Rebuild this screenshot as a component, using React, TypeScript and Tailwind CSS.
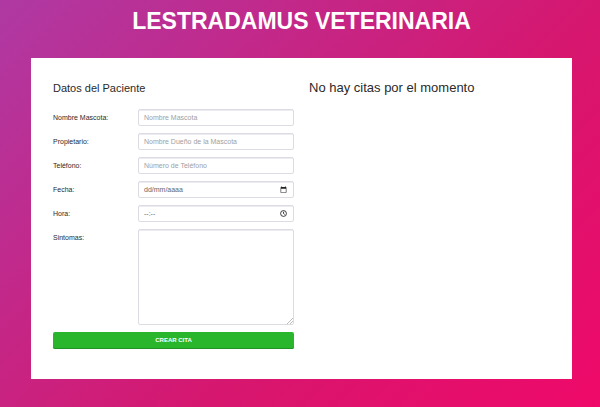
import React from "react";

const fieldClass =
  "block h-[17px] w-full rounded-[2px] border border-[#dcdde2] bg-white px-[5px] text-[7px] leading-[15px] text-[#666] shadow-[inset_0_1px_0_#ececf0] outline-none";

function CalendarIcon() {
  return (
    <svg viewBox="0 0 24 24" className="h-[7px] w-[7px]" fill="#222" aria-hidden="true">
      <path d="M20 3h-1V1h-2v2H7V1H5v2H4c-1.1 0-2 .9-2 2v16c0 1.1.9 2 2 2h16c1.1 0 2-.9 2-2V5c0-1.1-.9-2-2-2zm0 18H4V9h16v12z" />
    </svg>
  );
}

function ClockIcon() {
  return (
    <svg viewBox="0 0 24 24" className="h-[7px] w-[7px]" fill="none" stroke="#222" strokeWidth="3" aria-hidden="true">
      <circle cx="12" cy="12" r="10" />
      <path d="M12 6v6l4 3" />
    </svg>
  );
}

type FieldProps = {
  id: string;
  label: string;
  placeholder: string;
  tone?: string;
  icon?: React.ReactNode;
};

function Field({ id, label, placeholder, tone = "placeholder:text-[#a0a0a0]", icon }: FieldProps) {
  return (
    <div className="grid grid-cols-[85px_1fr]">
      <label htmlFor={id} className="leading-[17px]">
        {label}
      </label>
      <div className="relative">
        <input id={id} type="text" placeholder={placeholder} className={`${fieldClass} ${tone}`} />
        {icon && <span className="pointer-events-none absolute inset-y-0 right-[7px] flex items-center">{icon}</span>}
      </div>
    </div>
  );
}

export default function App() {
  return (
    <div className="min-h-screen bg-[linear-gradient(135deg,#af39a3_0%,#d6176f_60%,#ef0969_100%)] pr-[28px] pl-[31px] font-['Liberation_Sans',Arial,sans-serif] text-[#2a2a2a]">
      <h1 className="pt-[7px] text-center text-[23px] leading-[28px] font-bold text-white">LESTRADAMUS VETERINARIA</h1>
      <main className="mt-[23px] grid w-full grid-cols-2 gap-[15px] bg-white px-[22px] pt-[20px] pb-[30px]">
        <section>
          <h2 className="mb-[11px] text-[11px] leading-[20px]">Datos del Paciente</h2>
          <form className="flex flex-col gap-[7px] text-[7px]" onSubmit={(e) => e.preventDefault()}>
            <Field id="mascota" label="Nombre Mascota:" placeholder="Nombre Mascota" />
            <Field id="propietario" label="Propietario:" placeholder="Nombre Dueño de la Mascota" />
            <Field id="telefono" label="Teléfono:" placeholder="Número de Teléfono" />
            <Field id="fecha" label="Fecha:" placeholder="dd/mm/aaaa" tone="placeholder:text-[#666]" icon={<CalendarIcon />} />
            <Field id="hora" label="Hora:" placeholder="--:--" tone="placeholder:text-[#666]" icon={<ClockIcon />} />
            <div className="grid grid-cols-[85px_1fr]">
              <label htmlFor="sintomas" className="leading-[17px]">
                Sintomas:
              </label>
              <div className="relative">
                <textarea
                  id="sintomas"
                  className="block h-[96px] w-full resize-none rounded-[2px] border border-[#dcdde2] bg-white px-[5px] py-[4px] text-[7px] text-[#666] shadow-[inset_0_1px_0_#ececf0] outline-none"
                />
                <svg viewBox="0 0 6 6" className="pointer-events-none absolute right-px bottom-px h-[6px] w-[6px]" stroke="#bbb" strokeWidth="1" aria-hidden="true">
                  <path d="M0 6L6 0M3 6L6 3" />
                </svg>
              </div>
            </div>
            <button
              type="submit"
              className="h-[17px] w-full rounded-[2px] bg-[#29b62d] text-[6px] leading-[15px] font-bold text-white shadow-[inset_0_-1px_0_#219225]"
            >
              CREAR CITA
            </button>
          </form>
        </section>
        <section>
          <h2 className="text-[13px] leading-[20px]">No hay citas por el momento</h2>
        </section>
      </main>
    </div>
  );
}
